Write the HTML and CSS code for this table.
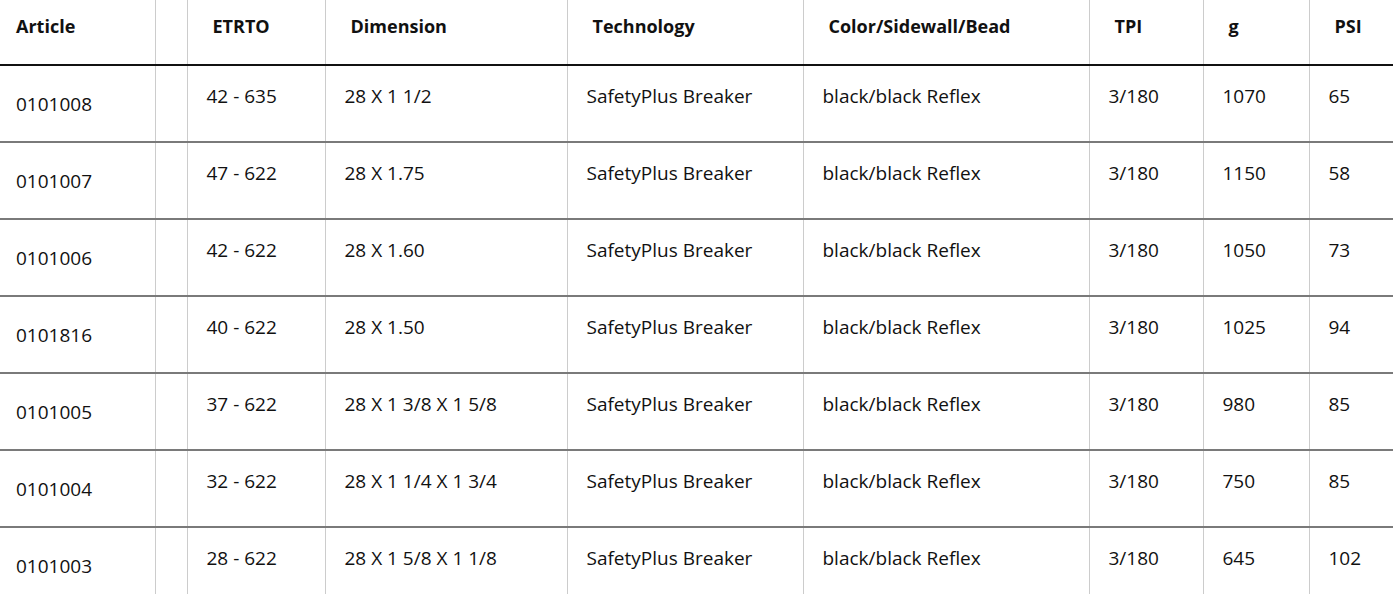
FILE: index.html
```html
<!DOCTYPE html>
<html>
<head>
<meta charset="utf-8">
<link rel="stylesheet" href="styles.css">
</head>
<body>
<table class="specs">
  <colgroup>
    <col class="c-article"><col class="c-gap"><col class="c-etrto"><col class="c-dim"><col class="c-tech"><col class="c-color"><col class="c-tpi"><col class="c-g"><col class="c-psi">
  </colgroup>
  <thead>
    <tr>
      <th class="first">Article</th><th></th><th>ETRTO</th><th>Dimension</th><th>Technology</th><th>Color/Sidewall/Bead</th><th>TPI</th><th>g</th><th>PSI</th>
    </tr>
  </thead>
  <tbody>
    <tr><td class="first">0101008</td><td></td><td>42 - 635</td><td>28 X 1 1/2</td><td>SafetyPlus Breaker</td><td>black/black Reflex</td><td>3/180</td><td>1070</td><td>65</td></tr>
    <tr><td class="first">0101007</td><td></td><td>47 - 622</td><td>28 X 1.75</td><td>SafetyPlus Breaker</td><td>black/black Reflex</td><td>3/180</td><td>1150</td><td>58</td></tr>
    <tr><td class="first">0101006</td><td></td><td>42 - 622</td><td>28 X 1.60</td><td>SafetyPlus Breaker</td><td>black/black Reflex</td><td>3/180</td><td>1050</td><td>73</td></tr>
    <tr><td class="first">0101816</td><td></td><td>40 - 622</td><td>28 X 1.50</td><td>SafetyPlus Breaker</td><td>black/black Reflex</td><td>3/180</td><td>1025</td><td>94</td></tr>
    <tr><td class="first">0101005</td><td></td><td>37 - 622</td><td>28 X 1 3/8 X 1 5/8</td><td>SafetyPlus Breaker</td><td>black/black Reflex</td><td>3/180</td><td>980</td><td>85</td></tr>
    <tr><td class="first">0101004</td><td></td><td>32 - 622</td><td>28 X 1 1/4 X 1 3/4</td><td>SafetyPlus Breaker</td><td>black/black Reflex</td><td>3/180</td><td>750</td><td>85</td></tr>
    <tr><td class="first">0101003</td><td></td><td>28 - 622</td><td>28 X 1 5/8 X 1 1/8</td><td>SafetyPlus Breaker</td><td>black/black Reflex</td><td>3/180</td><td>645</td><td>102</td></tr>
  </tbody>
</table>
</body>
</html>
```

FILE: styles.css
```css
html, body {
  margin: 0;
  padding: 0;
  background: #ffffff;
}
body {
  font-family: "Open Sans", "Liberation Sans", sans-serif;
  color: #111111;
  overflow: hidden;
}
.specs {
  width: 1393px;
  table-layout: fixed;
  border-collapse: collapse;
  font-size: 19px;
}
.c-article { width: 155px; }
.c-gap { width: 32px; }
.c-etrto { width: 138px; }
.c-dim { width: 242px; }
.c-tech { width: 236px; }
.c-color { width: 286px; }
.c-tpi { width: 114px; }
.c-g { width: 106px; }
.c-psi { width: 84px; }

.specs th,
.specs td {
  border-left: 1px solid #cccccc;
  text-align: left;
  white-space: nowrap;
  overflow: hidden;
}
.specs th.first,
.specs td.first {
  border-left: none;
  padding-left: 16px;
}
.specs th {
  height: 65px;
  box-sizing: border-box;
  padding: 13px 0 0 25px;
  vertical-align: top;
  font-weight: 700;
  font-size: 18px;
  line-height: 26px;
  border-bottom: 2px solid #111111;
}
.specs td {
  height: 77px;
  box-sizing: border-box;
  padding: 17px 0 0 19px;
  vertical-align: top;
  line-height: 26px;
  border-bottom: 2px solid #7a7a7a;
}
.specs td.first {
  vertical-align: middle;
  padding-top: 0;
}
.specs tbody tr:last-child td {
  border-bottom: none;
}
```
